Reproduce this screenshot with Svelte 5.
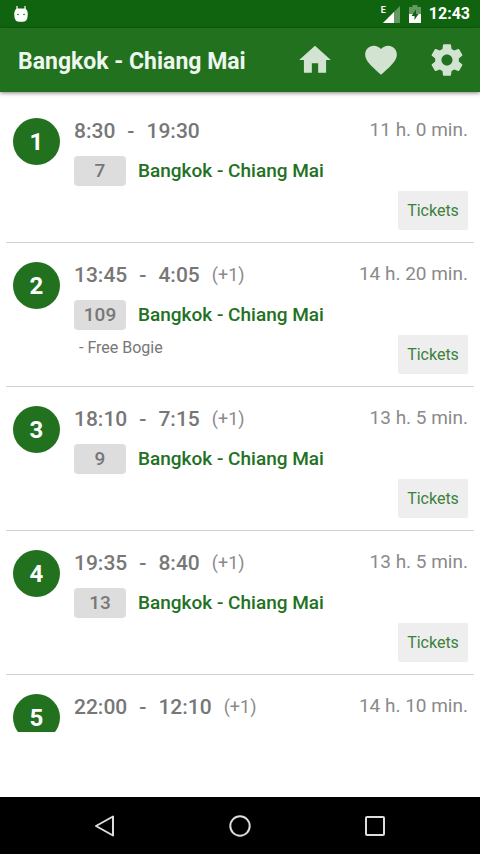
<script lang="ts">
	interface Train {
		departs: string;
		arrives: string;
		nextDay?: boolean;
		number: string;
		duration: string;
		note?: string;
	}

	const route = 'Bangkok - Chiang Mai';

	const trains: Train[] = [
		{ departs: '8:30', arrives: '19:30', number: '7', duration: '11 h. 0 min.' },
		{ departs: '13:45', arrives: '4:05', nextDay: true, number: '109', duration: '14 h. 20 min.', note: '- Free Bogie' },
		{ departs: '18:10', arrives: '7:15', nextDay: true, number: '9', duration: '13 h. 5 min.' },
		{ departs: '19:35', arrives: '8:40', nextDay: true, number: '13', duration: '13 h. 5 min.' },
		{ departs: '22:00', arrives: '12:10', nextDay: true, number: '51', duration: '14 h. 10 min.' }
	];
</script>

<div class="screen">
	<div class="status-bar">
		<svg class="droid" viewBox="0 0 16 18" aria-hidden="true">
			<path d="M4 1v4M12 1v4" stroke="#fff" stroke-width="1.2" />
			<path d="M4 3.5h8q2.6 1 2.8 5.5 0 4.5-1.6 6.5-1 1.3-5.2 1.3t-5.2-1.3q-1.6-2-1.6-6.5 .2-4.5 2.8-5.5z" fill="#fff" />
			<circle cx="5" cy="9.5" r="0.8" fill="#11640f" />
			<circle cx="11" cy="9.5" r="0.8" fill="#11640f" />
		</svg>
		<div class="status-icons">
			<span class="network">E</span>
			<svg class="signal" viewBox="0 0 17 17" aria-hidden="true">
				<path d="M17 0v17H0z" fill="#fff" opacity="0.35" />
				<path d="M11 6v11H0z" fill="#fff" />
			</svg>
			<svg class="battery" viewBox="0 0 12 18" aria-hidden="true">
				<path d="M3.5 0h5v2H12v16H0V2h3.5z" fill="#fff" opacity="0.35" />
				<path d="M0 9h12v9H0z" fill="#fff" />
				<path d="M7 4.5L2.5 11H5.5v4L9.5 9H7z" fill="#11640f" />
			</svg>
			<span class="clock">12:43</span>
		</div>
	</div>

	<header class="app-bar">
		<h1>{route}</h1>
		<button class="action" aria-label="Home">
			<svg viewBox="0 0 24 24"><path d="M10 20v-6h4v6h5v-8h3L12 3 2 12h3v8z" /></svg>
		</button>
		<button class="action" aria-label="Favourites">
			<svg viewBox="0 0 24 24"><path d="M12 21.35l-1.45-1.32C5.4 15.36 2 12.28 2 8.5 2 5.42 4.42 3 7.5 3c1.74 0 3.41.81 4.5 2.09C13.09 3.81 14.76 3 16.5 3 19.58 3 22 5.42 22 8.5c0 3.78-3.4 6.86-8.55 11.54L12 21.35z" /></svg>
		</button>
		<button class="action" aria-label="Settings">
			<svg viewBox="0 0 24 24"><path d="M19.43 12.98c.04-.32.07-.64.07-.98s-.03-.66-.07-.98l2.11-1.65c.19-.15.24-.42.12-.64l-2-3.46c-.12-.22-.39-.3-.61-.22l-2.49 1c-.52-.4-1.08-.73-1.69-.98l-.38-2.65C14.46 2.18 14.25 2 14 2h-4c-.25 0-.46.18-.49.42l-.38 2.65c-.61.25-1.17.59-1.69.98l-2.49-1c-.23-.09-.49 0-.61.22l-2 3.46c-.13.22-.07.49.12.64l2.11 1.65c-.04.32-.07.65-.07.98s.03.66.07.98l-2.11 1.65c-.19.15-.24.42-.12.64l2 3.46c.12.22.39.3.61.22l2.49-1c.52.4 1.08.73 1.69.98l.38 2.65c.03.24.24.42.49.42h4c.25 0 .46-.18.49-.42l.38-2.65c.61-.25 1.17-.59 1.69-.98l2.49 1c.23.09.49 0 .61-.22l2-3.46c.12-.22.07-.49-.12-.64l-2.11-1.65zM12 15.5c-1.93 0-3.5-1.57-3.5-3.5s1.57-3.5 3.5-3.5 3.5 1.57 3.5 3.5-1.57 3.5-3.5 3.5z" /></svg>
		</button>
	</header>

	<ul class="trains">
		{#each trains as train, i}
			<li class="train">
				<span class="index">{i + 1}</span>
				<div class="details">
					<div class="times">
						<span>{train.departs}</span>
						<span>-</span>
						<span>{train.arrives}</span>
						{#if train.nextDay}
							<span class="next-day">(+1)</span>
						{/if}
					</div>
					<div class="line">
						<span class="number">{train.number}</span>
						<span class="route">{route}</span>
					</div>
					{#if train.note}
						<p class="note">{train.note}</p>
					{/if}
				</div>
				<div class="side">
					<span class="duration">{train.duration}</span>
					<button class="tickets">Tickets</button>
				</div>
			</li>
		{/each}
	</ul>

	<div class="banner"></div>

	<nav class="nav-bar">
		<button aria-label="Back">
			<svg viewBox="0 0 24 24"><path d="M20 2.5v19L3 12z" /></svg>
		</button>
		<button aria-label="Home screen">
			<svg viewBox="0 0 24 24"><circle cx="12" cy="12" r="9.7" /></svg>
		</button>
		<button aria-label="Recent apps">
			<svg viewBox="0 0 24 24"><rect x="3" y="3" width="18" height="18" rx="1" /></svg>
		</button>
	</nav>
</div>

<style>
	:global(body) {
		margin: 0;
		background: #fff;
	}

	.screen {
		display: flex;
		flex-direction: column;
		height: 100vh;
		font-family: Roboto, "Liberation Sans", sans-serif;
		color: #777;
	}

	button {
		padding: 0;
		border: 0;
		background: none;
		font-family: inherit;
		cursor: pointer;
	}

	.status-bar {
		display: flex;
		align-items: center;
		justify-content: space-between;
		flex: none;
		height: 28px;
		padding: 0 10px 0 13px;
		background: #11640f;
		color: #fff;
	}

	.droid {
		width: 16px;
		height: 18px;
	}

	.status-icons {
		display: flex;
		align-items: center;
	}

	.network {
		align-self: flex-start;
		font-size: 9px;
		line-height: 12px;
		font-weight: 700;
	}

	.signal {
		width: 17px;
		height: 17px;
		margin: 0 9px 0 -3px;
	}

	.battery {
		width: 12px;
		height: 18px;
		margin-right: 8px;
	}

	.clock {
		font-size: 16px;
		line-height: 20px;
		font-weight: 700;
	}

	.app-bar {
		display: flex;
		align-items: center;
		flex: none;
		z-index: 1;
		height: 64px;
		padding-left: 18px;
		background: #22711f;
		box-shadow: 0 1px 4px rgba(0, 0, 0, 0.5);
	}

	h1 {
		flex: 1;
		margin: 0;
		padding-top: 4px;
		font-size: 23px;
		line-height: 32px;
		font-weight: 700;
		color: #eef6ee;
	}

	.action {
		display: grid;
		place-items: center;
		width: 66px;
		height: 64px;
	}

	.action svg {
		width: 38px;
		height: 38px;
		fill: #d3e3d2;
	}

	.trains {
		flex: 1;
		min-height: 0;
		margin: 0;
		padding: 7px 6px 0;
		overflow-y: auto;
		scrollbar-width: none;
		list-style: none;
	}

	.train {
		display: flex;
		padding: 19px 6px 12px 7px;
		border-bottom: 1px solid #d2d2d2;
	}

	.index {
		flex: none;
		width: 47px;
		height: 47px;
		margin-right: 14px;
		border-radius: 50%;
		background: #22711f;
		color: #fff;
		font-size: 24px;
		line-height: 48px;
		font-weight: 700;
		text-align: center;
	}

	.details {
		flex: 1;
	}

	.times {
		display: flex;
		gap: 12px;
		font-size: 21px;
		line-height: 26px;
		font-weight: 500;
	}

	.next-day {
		font-size: 18px;
		font-weight: 400;
		color: #8a8a8a;
	}

	.line {
		display: flex;
		gap: 12px;
		margin-top: 12px;
		font-size: 19px;
		line-height: 30px;
		font-weight: 500;
	}

	.number {
		width: 52px;
		border-radius: 4px;
		background: #ddd;
		text-align: center;
	}

	.route {
		color: #22711f;
	}

	.note {
		margin: 6px 0 0 5px;
		font-size: 16px;
		line-height: 24px;
	}

	.side {
		display: flex;
		flex-direction: column;
		align-items: flex-end;
		justify-content: space-between;
		gap: 49px;
	}

	.duration {
		font-size: 19px;
		line-height: 24px;
		color: #8a8a8a;
	}

	.tickets {
		width: 70px;
		height: 39px;
		border-radius: 2px;
		background: #eee;
		color: #3d803b;
		font-size: 16px;
	}

	.banner {
		flex: none;
		height: 65px;
	}

	.nav-bar {
		display: grid;
		grid-template-columns: repeat(3, 135px);
		justify-content: center;
		flex: none;
		height: 57px;
		background: #000;
	}

	.nav-bar svg {
		display: block;
		width: 24px;
		height: 24px;
		margin: auto;
		fill: none;
		stroke: #ddd;
		stroke-width: 2;
		stroke-linejoin: round;
	}
</style>
